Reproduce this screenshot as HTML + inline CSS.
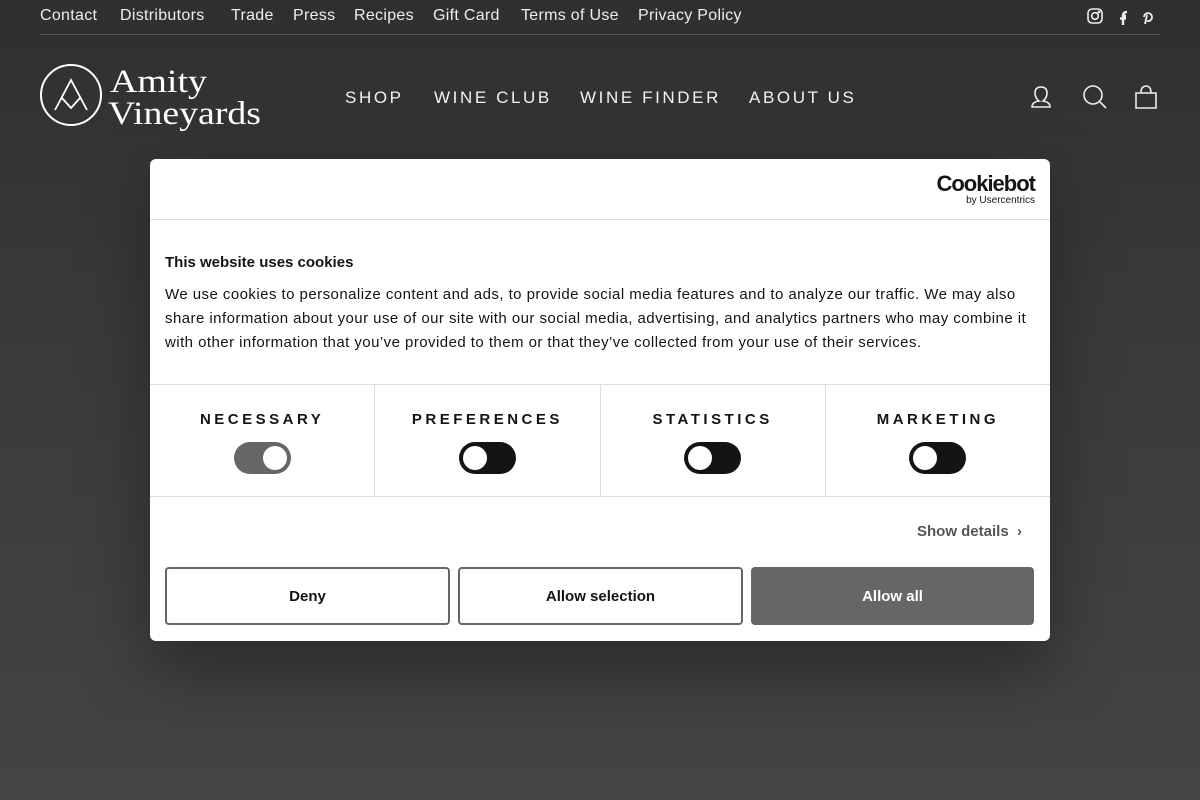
<!DOCTYPE html>
<html><head><meta charset="utf-8"><style>
*{box-sizing:border-box;margin:0;padding:0}
body{width:1200px;height:800px;overflow:hidden;background:linear-gradient(#2f2f2f,#3a3a3a 40%,#444 100%);font-family:"Liberation Sans",sans-serif;position:relative;color:#fff}
.top{position:absolute;left:40px;right:40px;top:0;height:35px;border-bottom:1px solid #555;font-size:16px;color:#eee;letter-spacing:.3px}
.top span{position:absolute;top:7px}
.nav{position:absolute;top:88px;font-size:17px;letter-spacing:2.6px;color:#f2f2f2}
.logo{position:absolute;left:40px;top:64px}
.box{position:absolute;left:150px;top:159px;width:900px;height:482px;background:#fff;border-radius:6px;color:#141414;box-shadow:0 30px 70px rgba(0,0,0,.35)}
.hd{height:61px;border-bottom:1px solid #ddd;position:relative}
h2{position:absolute;left:15px;top:95px;font-size:15px;font-weight:bold}
p{position:absolute;left:15px;top:124px;width:875px;font-size:15px;line-height:24px;letter-spacing:.45px}
.cats{position:absolute;top:225px;left:0;width:900px;height:113px;border-top:1px solid #ddd;border-bottom:1px solid #ddd;display:flex}
.cat{flex:1;border-right:1px solid #ddd;text-align:center;padding-top:26px;font-weight:bold;font-size:15px;letter-spacing:3.5px}
.cat:last-child{border-right:0}
.tg{width:57px;height:32px;border-radius:16px;background:#141414;margin:14px auto 0;position:relative}
.tg:after{content:"";position:absolute;left:4px;top:4px;width:24px;height:24px;border-radius:50%;background:#fff}
.tg.on{background:#666}.tg.on:after{left:29px}
.btn{position:absolute;top:408px;height:58px;width:285px;border:2px solid #666;border-radius:4px;text-align:center;line-height:55px;font-weight:bold;font-size:15px}
</style></head><body>
<div class="top">
<span style="left:0">Contact</span><span style="left:80px">Distributors</span><span style="left:191px">Trade</span><span style="left:253px">Press</span><span style="left:314px">Recipes</span><span style="left:393px">Gift Card</span><span style="left:481px">Terms of Use</span><span style="left:598px">Privacy Policy</span>
<svg style="position:absolute;left:1047px;top:8px" width="70" height="18" fill="none" stroke="#eee" stroke-width="1.6"><rect x="1" y="1" width="14" height="14" rx="4"/><circle cx="8" cy="8" r="3.3"/><circle cx="12" cy="4" r=".6" fill="#eee"/><path d="M36 17V8h3M33 10.5h6M36 8q0-4 4-4" stroke-width="2.4"/><path d="M58 16l2-9M57 9a4 4 0 1 1 3 4" stroke-width="1.8"/></svg>
</div>
<div class="logo"><svg width="225" height="70"><circle cx="31" cy="31" r="30" fill="none" stroke="#fff" stroke-width="2"/><path d="M15 46L31 16 47 46M22 34l9 10 9-10" fill="none" stroke="#fff" stroke-width="1.8"/><text x="70" y="28" font-family="Liberation Serif" font-size="33" fill="#fff" textLength="97" lengthAdjust="spacingAndGlyphs">Amity</text><text x="68" y="60" font-family="Liberation Serif" font-size="33" fill="#fff" textLength="153" lengthAdjust="spacingAndGlyphs">Vineyards</text></svg></div>
<div class="nav" style="left:345px">SHOP</div><div class="nav" style="left:434px">WINE CLUB</div><div class="nav" style="left:580px">WINE FINDER</div><div class="nav" style="left:749px">ABOUT US</div>
<svg style="position:absolute;left:1030px;top:84px" width="130" height="28" fill="none" stroke="#eee" stroke-width="1.6"><path d="M2 23q0-5 7-6q-4-3-4-8q0-6 6-6q6 0 6 6q0 5-4 8q7 1 7 6z"/><circle cx="63" cy="11" r="9"/><path d="M70 18l6 6"/><path d="M106 9h20v15h-20zM111 9q0-7 5-7 5 0 5 7"/></svg>
<div class="box">
<div class="hd"><div style="position:absolute;right:15px;top:14px;text-align:right"><div style="font-size:22px;font-weight:bold;letter-spacing:-1px;line-height:22px">Cookiebot</div><div style="font-size:10px;line-height:11px">by Usercentrics</div></div></div>
<h2>This website uses cookies</h2>
<p>We use cookies to personalize content and ads, to provide social media features and to analyze our traffic. We may also share information about your use of our site with our social media, advertising, and analytics partners who may combine it with other information that you’ve provided to them or that they’ve collected from your use of their services.</p>
<div class="cats"><div class="cat">NECESSARY<div class="tg on"></div></div><div class="cat">PREFERENCES<div class="tg"></div></div><div class="cat">STATISTICS<div class="tg"></div></div><div class="cat">MARKETING<div class="tg"></div></div></div>
<div style="position:absolute;right:28px;top:364px;font-size:15px;font-weight:bold;color:#555">Show details &nbsp;›</div>
<div class="btn" style="left:15px">Deny</div><div class="btn" style="left:308px">Allow selection</div><div class="btn" style="left:601px;width:283px;background:#666;border-color:#666;color:#fff">Allow all</div>
</div>
</body></html>
